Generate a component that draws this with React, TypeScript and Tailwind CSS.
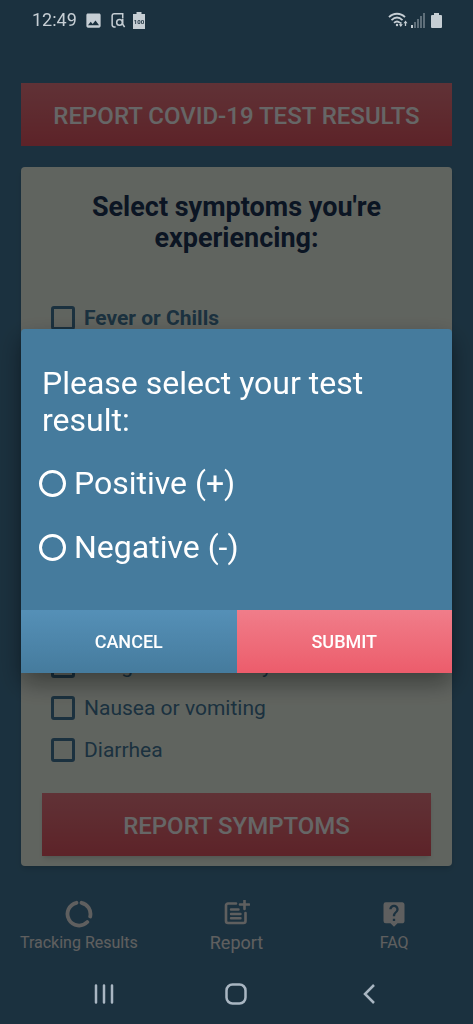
/**
 * Symptom report screen with the "test result" dialog open on top of it.
 *
 * The screen underneath keeps its normal colours and is dimmed by the scrim;
 * the status bar and the system navigation keys sit above the scrim.
 */
import { useState } from 'react'
import { MdImage, MdLiveHelp } from 'react-icons/md'

const SYMPTOMS = [
  'Fever or Chills',
  'Cough',
  'Shortness of breath or difficulty breathing',
  'Fatigue',
  'Muscle or body aches',
  'Headache',
  'New loss of taste or smell',
  'Sore throat',
  'Congestion or runny nose',
  'Nausea or vomiting',
  'Diarrhea',
]

const RESULTS = [
  { value: 'positive', label: 'Positive (+)' },
  { value: 'negative', label: 'Negative (-)' },
]

function StatusBar() {
  return (
    <header className="relative z-20 flex h-10 items-center justify-between pr-[31px] pl-8 text-[#c6ced4]">
      <div className="flex items-center gap-[7px]">
        <time className="text-lg">12:49</time>
        <MdImage className="size-[19px]" aria-hidden />
        {/* Page with a magnifier */}
        <svg viewBox="0 0 16 18" className="h-[17px] w-4" fill="none" stroke="currentColor" strokeWidth="1.6" aria-hidden>
          <path d="M5.5 15.8H4A2.2 2.2 0 0 1 1.8 13.6V4A2.2 2.2 0 0 1 4 1.8H13V7" />
          <circle cx="9.6" cy="11" r="3" />
          <path d="M13 7.5V13L15 16" />
        </svg>
        <svg viewBox="0 0 12 17" className="h-[17px] w-3" aria-hidden>
          <path d="M3.5 0h5v2H12v15H0V2h3.5z" fill="currentColor" />
          <text x="6" y="11.5" textAnchor="middle" fontSize="6" fontWeight="700" fill="#1c313f">
            100
          </text>
        </svg>
      </div>
      <div className="flex items-center gap-[3px]">
        <svg viewBox="0 0 20 16" className="h-4 w-5" fill="none" stroke="currentColor" strokeWidth="1.8" aria-hidden>
          <path d="M1 5.2C5.5 .6 12.5 .6 17 5.2" />
          <path d="M3.5 8.1C7 4.7 11 4.7 14.5 8.1" />
          <path d="M6 10.8C8 9 10 9 12 10.8" />
          <circle cx="9" cy="13" r="1.2" fill="currentColor" stroke="none" />
          <path d="M12.8 10v3.5M17.5 14v-3.5" strokeWidth="1.3" />
          <path d="M10.8 12.2h4l-2 2.8zM15.5 11.2h4l-2-2.8z" fill="currentColor" stroke="none" />
        </svg>
        <svg viewBox="0 0 14 15" className="h-[15px] w-3.5" fill="currentColor" aria-hidden>
          <rect x="0" y="12" width="2" height="3" />
          <rect x="3" y="9" width="2" height="6" opacity="0.4" />
          <rect x="6" y="6" width="2" height="9" opacity="0.4" />
          <rect x="9" y="3" width="2" height="12" opacity="0.4" />
          <rect x="12" y="0" width="2" height="15" opacity="0.4" />
        </svg>
        <svg viewBox="0 0 11 15" className="ml-[3px] h-[15px] w-[11px]" fill="currentColor" aria-hidden>
          <path d="M3 0h5v2h2a1 1 0 0 1 1 1v11a1 1 0 0 1-1 1H1a1 1 0 0 1-1-1V3a1 1 0 0 1 1-1h2z" />
        </svg>
      </div>
    </header>
  )
}

function SymptomForm() {
  return (
    <form className="rounded-sm bg-[#f1faee] px-[21px] pt-[25px] pb-[10px] shadow-md">
      <h1 className="px-8 text-center text-[27px] leading-[31px] font-bold text-[#1d3557]">
        Select symptoms you're experiencing:
      </h1>
      <ul className="mt-[43px] px-[9px]">
        {SYMPTOMS.map((symptom, i) => (
          <li key={symptom}>
            <label
              className={`flex min-h-[42px] items-center gap-[9px] text-[21px] leading-[27px] text-[#457b9d] ${
                i === 0 ? 'font-bold' : ''
              }`}
            >
              <input
                type="checkbox"
                className="size-6 shrink-0 appearance-none rounded-[3px] border-[3px] border-[#457b9d] checked:bg-[#457b9d]"
              />
              {symptom}
            </label>
          </li>
        ))}
      </ul>
      <button
        type="button"
        className="mt-[22px] h-[63px] w-full bg-linear-to-b from-[#f07d88] to-[#e85765] pt-0.5 text-2xl font-medium text-white shadow-md"
      >
        REPORT SYMPTOMS
      </button>
    </form>
  )
}

function TabBar() {
  return (
    <nav aria-label="Sections" className="grid h-[75px] grid-cols-3 text-[#eeeeee]">
      <a href="#tracking" className="flex flex-col items-center justify-end gap-[5px] pb-[10px]">
        <svg viewBox="0 0 28 28" className="size-7" fill="none" stroke="currentColor" strokeWidth="3.8" strokeLinecap="round" aria-hidden>
          <path d="M16.5 2.8A11.5 11.5 0 0 1 25.2 16.5" />
          <path d="M22.3 22A11.5 11.5 0 1 1 11.5 2.8" />
        </svg>
        <span className="text-base leading-5">Tracking Results</span>
      </a>
      <a href="#report" className="flex flex-col items-center justify-end gap-[5px] pb-[10px]">
        {/* Note with a plus on its corner */}
        <svg viewBox="0 0 28 28" className="size-7" fill="none" stroke="currentColor" strokeWidth="2.6" strokeLinecap="round" strokeLinejoin="round" aria-hidden>
          <path d="M14 3.500H6A2 2 0 0 0 4 5.500v15.500a2 2 0 0 0 2 2h15.500a2 2 0 0 0 2-2v-8" />
          <path d="M9 9.500h7.500M9 14h9.500M9 18.300h9.500" strokeWidth="2.400" />
          <path d="M22.500 0v9M18 4.500h9" />
        </svg>
        <span className="text-lg leading-5">Report</span>
      </a>
      <a href="#faq" className="flex flex-col items-center justify-end gap-[5px] pb-[10px]">
        <MdLiveHelp className="size-7" aria-hidden />
        <span className="text-base leading-5">FAQ</span>
      </a>
    </nav>
  )
}

function SystemKeys() {
  const key = 'flex items-center justify-center'

  return (
    <footer className="relative z-20 grid h-[61px] grid-cols-3 px-[38px] text-[#a9b6c2]">
      <button type="button" aria-label="Recent apps" className={key}>
        <svg viewBox="0 0 20 20" className="size-5" stroke="currentColor" strokeWidth="2.5" strokeLinecap="round" aria-hidden>
          <path d="M2 1.5v17M10 1.5v17M18 1.5v17" />
        </svg>
      </button>
      <button type="button" aria-label="Home" className={key}>
        <svg viewBox="0 0 22 22" className="size-[22px]" fill="none" stroke="currentColor" strokeWidth="2.5" aria-hidden>
          <rect x="1.5" y="1.5" width="19" height="19" rx="6" />
        </svg>
      </button>
      <button type="button" aria-label="Back" className={key}>
        <svg viewBox="0 0 12 20" className="h-5 w-3" fill="none" stroke="currentColor" strokeWidth="2.5" aria-hidden>
          <path d="M11 1L2 10l9 9" />
        </svg>
      </button>
    </footer>
  )
}

function ResultDialog() {
  const [result, setResult] = useState('')

  return (
    <div className="fixed inset-0 z-10 flex items-center bg-black/60 px-[21px] pt-10 pb-[63px]">
      <div
        role="dialog"
        aria-modal="true"
        aria-labelledby="result-title"
        className="w-full overflow-hidden rounded-t-sm bg-[#457b9d] shadow-[0_10px_24px_rgba(0,0,0,0.4)]"
      >
        <div className="px-[21px] pt-9 pb-[30px] text-white">
          <h2 id="result-title" className="text-[32px] leading-[37px]">
            Please select your test result:
          </h2>
          <div className="mt-[13px] -ml-[3px]">
            {RESULTS.map(({ value, label }) => (
              <label key={value} className="flex h-16 items-center gap-2 text-[32px] leading-[37px]">
                <input
                  type="radio"
                  name="result"
                  value={value}
                  checked={result === value}
                  onChange={() => setResult(value)}
                  className="size-[27px] appearance-none rounded-full border-[3px] border-white checked:bg-white"
                />
                {label}
              </label>
            ))}
          </div>
        </div>
        <div className="grid h-[63px] grid-cols-2 text-lg font-medium text-white">
          <button type="button" className="bg-linear-to-b from-[#5590b7] to-[#457b9d] pt-0.5">
            CANCEL
          </button>
          <button type="button" className="bg-linear-to-b from-[#f07d8a] to-[#ec5c6b] pt-0.5">
            SUBMIT
          </button>
        </div>
      </div>
    </div>
  )
}

export default function App() {
  return (
    <div className="flex min-h-screen flex-col bg-[#457b9d] font-[Roboto,sans-serif]">
      <StatusBar />
      <main className="flex flex-1 flex-col gap-[21px] px-[21px] pt-[43px] pb-[21px]">
        <button
          type="button"
          className="h-[63px] w-full bg-linear-to-b from-[#f07d88] to-[#e85765] pt-0.5 text-2xl font-medium text-white"
        >
          REPORT COVID-19 TEST RESULTS
        </button>
        <SymptomForm />
      </main>
      <TabBar />
      <SystemKeys />
      <ResultDialog />
    </div>
  )
}
